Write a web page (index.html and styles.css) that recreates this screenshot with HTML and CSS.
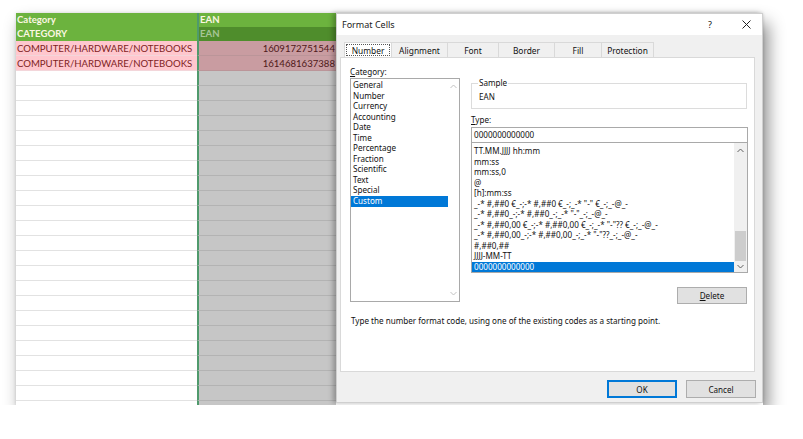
FILE: index.html
```html
<!DOCTYPE html>
<html>
<head>
<meta charset="utf-8">
<link rel="stylesheet" href="styles.css">
</head>
<body>
<div class="shot">
  <div class="sheet">
    <div class="c a hd">Category</div><div class="c b hd">EAN</div>
    <div class="c a hd">CATEGORY</div><div class="c b hd2">EAN</div>
    <div class="c a pk">COMPUTER/HARDWARE/NOTEBOOKS</div><div class="c b pkb">1609172751544</div>
    <div class="c a pk">COMPUTER/HARDWARE/NOTEBOOKS</div><div class="c b pkb">1614681637388</div>
    <div class="c a"></div><div class="c b"></div>
    <div class="c a"></div><div class="c b"></div>
    <div class="c a"></div><div class="c b"></div>
    <div class="c a"></div><div class="c b"></div>
    <div class="c a"></div><div class="c b"></div>
    <div class="c a"></div><div class="c b"></div>
    <div class="c a"></div><div class="c b"></div>
    <div class="c a"></div><div class="c b"></div>
    <div class="c a"></div><div class="c b"></div>
    <div class="c a"></div><div class="c b"></div>
    <div class="c a"></div><div class="c b"></div>
    <div class="c a"></div><div class="c b"></div>
    <div class="c a"></div><div class="c b"></div>
    <div class="c a"></div><div class="c b"></div>
    <div class="c a"></div><div class="c b"></div>
    <div class="c a"></div><div class="c b"></div>
    <div class="c a"></div><div class="c b"></div>
    <div class="c a"></div><div class="c b"></div>
    <div class="c a"></div><div class="c b"></div>
    <div class="c a"></div><div class="c b"></div>
    <div class="c a"></div><div class="c b"></div>
    <div class="c a"></div><div class="c b"></div>
    <div class="c a"></div><div class="c b"></div>
  </div>
  <div class="dialog">
    <div class="titlebar">
      <span class="title">Format Cells</span>
      <span class="help">?</span>
      <span class="close"><svg width="9" height="9" viewBox="0 0 9 9"><path d="M0.5 0.5L8.5 8.5M8.5 0.5L0.5 8.5" stroke="#222" stroke-width="1" fill="none"/></svg></span>
    </div>
    <div class="body">
      <div class="tabs">
        <div class="tab sel"><span class="focus">Number</span></div>
        <div class="tab w56">Alignment</div>
        <div class="tab w51">Font</div>
        <div class="tab w56">Border</div>
        <div class="tab w47">Fill</div>
        <div class="tab w52">Protection</div>
      </div>
      <div class="panel">
        <div class="cols">
          <div class="leftcol">
            <div class="lbl"><u>C</u>ategory:</div>
            <div class="catbox">
              <div class="items">
                <div class="it">General</div>
                <div class="it">Number</div>
                <div class="it">Currency</div>
                <div class="it">Accounting</div>
                <div class="it">Date</div>
                <div class="it">Time</div>
                <div class="it">Percentage</div>
                <div class="it">Fraction</div>
                <div class="it">Scientific</div>
                <div class="it">Text</div>
                <div class="it">Special</div>
                <div class="it on">Custom</div>
              </div>
              <div class="vscroll dis">
                <svg width="7" height="5" viewBox="0 0 7 5"><path d="M0.5 4L3.5 1L6.5 4" stroke="#c2c2c2" fill="none"/></svg>
                <span class="grow"></span>
                <svg width="7" height="5" viewBox="0 0 7 5"><path d="M0.5 1L3.5 4L6.5 1" stroke="#c2c2c2" fill="none"/></svg>
              </div>
            </div>
          </div>
          <div class="rightcol">
            <fieldset class="sample">
              <legend>Sample</legend>
              <div class="samplev">EAN</div>
            </fieldset>
            <div class="lbl typelbl"><u>T</u>ype:</div>
            <div class="input">0000000000000</div>
            <div class="typebox">
              <div class="items titems">
                <div class="it">TT.MM.JJJJ hh:mm</div>
                <div class="it">mm:ss</div>
                <div class="it">mm:ss,0</div>
                <div class="it">@</div>
                <div class="it">[h]:mm:ss</div>
                <div class="it">_-* #,##0 €_-;-* #,##0 €_-;_-* "-" €_-;_-@_-</div>
                <div class="it">_-* #,##0_-;-* #,##0_-;_-* "-"_-;_-@_-</div>
                <div class="it">_-* #,##0,00 €_-;-* #,##0,00 €_-;_-* "-"?? €_-;_-@_-</div>
                <div class="it">_-* #,##0,00_-;-* #,##0,00_-;_-* "-"??_-;_-@_-</div>
                <div class="it">#,##0,##</div>
                <div class="it">JJJJ-MM-TT</div>
                <div class="it on">0000000000000</div>
              </div>
              <div class="vscroll trk">
                <svg width="7" height="5" viewBox="0 0 7 5"><path d="M0.5 4L3.5 1L6.5 4" stroke="#606060" fill="none"/></svg>
                <span class="track"><span class="thumb"></span></span>
                <svg width="7" height="5" viewBox="0 0 7 5"><path d="M0.5 1L3.5 4L6.5 1" stroke="#606060" fill="none"/></svg>
              </div>
            </div>
            <div class="btn del"><u>D</u>elete</div>
          </div>
        </div>
        <div class="desc">Type the number format code, using one of the existing codes as a starting point.</div>
      </div>
      <div class="buttons">
        <div class="btn ok">OK</div>
        <div class="btn">Cancel</div>
      </div>
    </div>
  </div>
</div>
</body>
</html>
```
FILE: styles.css
```css
* { box-sizing: border-box; }
body {
  margin: 0;
  background: #ffffff;
  font-family: "Noto Sans", "Open Sans", sans-serif;
}
.shot {
  display: flex;
  margin: 13px 0 0 16px;
  width: 747px;
  height: 392px;
  box-shadow: 5px 10px 16px rgba(0,0,0,0.45), 0 0 3px rgba(0,0,0,0.12);
}
/* spreadsheet */
.sheet {
  width: 320px;
  height: 392px;
  overflow: hidden;
  display: grid;
  grid-template-columns: 181px 139px;
  grid-template-rows: 14px 14px;
  grid-auto-rows: 15px;
  align-content: start;
  background: #ffffff;
  font-family: Lato, "Liberation Sans", sans-serif;
  font-size: 9.6px;
}
.c {
  border-bottom: 1px solid #e2e2e2;
  padding: 0 1px;
  line-height: 14px;
  white-space: nowrap;
  overflow: hidden;
}
.pk, .pkb { line-height: 15px; }
.b {
  border-left: 2px solid #4f9a6c;
  background: #c6c6c6;
  border-bottom-color: #b3b3b3;
  text-align: right;
}
.hd {
  background: #6cb33e;
  color: #fbf7e2;
  font-weight: bold;
  border-bottom: none;
  text-align: left;
}
.hd2 {
  background: #4f8d2c;
  color: #a6c596;
  font-weight: bold;
  border-bottom: none;
  text-align: left;
}
.pk {
  background: #ffc7ce;
  color: #7e1e1e;
  border-bottom-color: #f3d6da;
}
.pkb {
  background: #c99ca1;
  color: #4f1818;
  border-bottom-color: #bb9599;
}
/* dialog */
.dialog {
  width: 427px;
  height: 390px;
  background: #f0f0f0;
  border: 1px solid #cfcfcf;
  box-shadow: -3px 0 5px rgba(0,0,0,0.28);
  display: flex;
  flex-direction: column;
  font-size: 8.1px;
  color: #111;
}
.titlebar {
  height: 21px;
  background: #ffffff;
  display: flex;
  align-items: center;
  padding-left: 5px;
}
.title { font-size: 9px; flex: 1; color: #1a1a1a; }
.help { width: 20px; text-align: center; font-size: 9px; margin-right: 14px; }
.close { width: 28px; display: flex; justify-content: center; padding-right: 4px; }
.body {
  flex: 1;
  padding: 7px 6px 0 3px;
  display: flex;
  flex-direction: column;
}
.tabs {
  display: flex;
  padding-left: 4px;
  height: 15px;
  font-size: 8.4px;
}
.tab {
  width: 48px;
  border: 1px solid #d9d9d9;
  border-bottom: none;
  margin-left: -1px;
  background: #f0f0f0;
  display: flex;
  align-items: center;
  justify-content: center;
}
.tab.sel { background: #fff; margin-left: 0; padding: 1px; }
.focus {
  border: 1px dotted #555;
  width: 100%;
  height: 100%;
  display: flex;
  align-items: center;
  justify-content: center;
}
.w56 { width: 57px; }
.w51 { width: 52px; }
.w47 { width: 48px; }
.w52 { width: 53px; }
.panel {
  height: 315px;
  background: #ffffff;
  border: 1px solid #d9d9d9;
  padding: 8px 6px 0 9px;
  margin-right: 1px;
}
.cols {
  display: grid;
  grid-template-columns: 110px 277px;
  column-gap: 11px;
}
.lbl { height: 12px; line-height: 11px; }
.catbox {
  height: 224px;
  border: 1px solid #a9a9a9;
  display: flex;
}
.items { flex: 1; padding-top: 1px; }
.it {
  line-height: 10.55px;
  height: 10.55px;
  padding-left: 2px;
  white-space: nowrap;
  overflow: hidden;
}
.it.on { background: #0078d7; color: #ffffff; }
.vscroll {
  width: 11px;
  display: flex;
  flex-direction: column;
  align-items: center;
  padding: 5px 0 5px;
}
.grow { flex: 1; }
.vscroll.trk {
  width: 13px;
  background: #f0f0f0;
  padding: 5px 1px 3px;
}
.track {
  flex: 1;
  width: 100%;
  display: flex;
  flex-direction: column;
}
.thumb {
  margin-top: auto;
  height: 30px;
  background: #cdcdcd;
  margin-bottom: 3px;
}
.rightcol { display: flex; flex-direction: column; }
.sample {
  margin: 12px 0 0;
  border: 1px solid #dcdcdc;
  padding: 0 6px 3px 7px;
  height: 31px;
  width: 276px;
}
.sample legend { padding: 0 1px; margin-left: -1px; line-height: 10px; }
.samplev { line-height: 10px; padding-top: 4px; }
.typelbl { margin-top: 5px; height: 13px; }
.input {
  height: 16px;
  border: 1px solid #a9a9a9;
  line-height: 14px;
  padding-left: 2px;
}
.typebox {
  height: 130px;
  border: 1px solid #a9a9a9;
  border-top: none;
  display: flex;
}
.titems { padding-top: 3px; overflow: hidden; }
.btn {
  width: 70px;
  height: 18px;
  background: #e1e1e1;
  border: 1px solid #adadad;
  display: flex;
  align-items: center;
  justify-content: center;
}
.del { align-self: flex-end; margin-top: 14px; height: 17px; margin-right: 1px; }
.desc { margin-top: 11px; line-height: 11px; padding-left: 1px; }
.buttons {
  display: flex;
  justify-content: flex-end;
  gap: 9px;
  margin-top: 8px;
}
.ok { border: 2px solid #0078d7; }
```
